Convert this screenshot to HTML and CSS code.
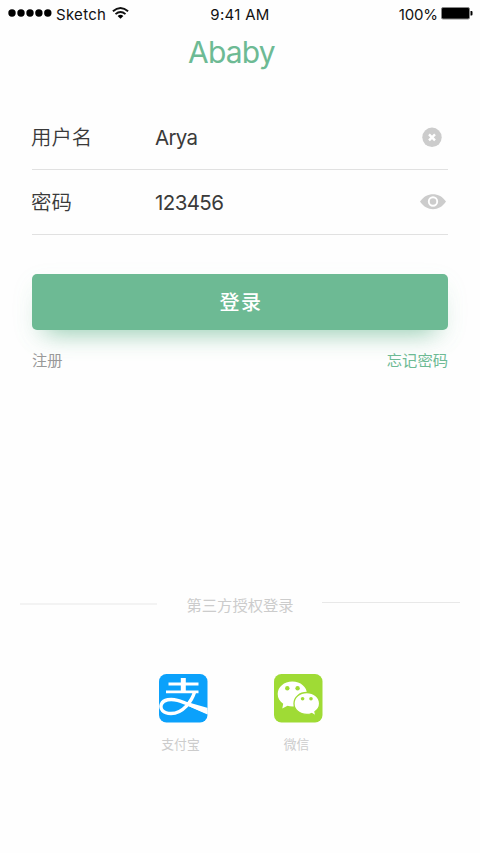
FILE: index.html
```html
<!DOCTYPE html>
<html lang="zh-CN">
<head>
<meta charset="utf-8">
<title>Ababy</title>
<link rel="stylesheet" href="styles.css">
</head>
<body>
<div class="status">
  <div class="status-left">
    <svg class="signal" width="44" height="8" viewBox="0 0 44 8"><circle cx="4" cy="4" r="3.7"/><circle cx="13" cy="4" r="3.7"/><circle cx="22" cy="4" r="3.7"/><circle cx="30.9" cy="4" r="3.7"/><circle cx="39.8" cy="4" r="3.7"/></svg>
    <span class="carrier">Sketch</span>
    <svg class="wifi" width="17" height="12" viewBox="0 0 17 12"><g fill="none" stroke="#111" stroke-width="1.9"><path d="M.9 4.3Q8.5-2.3 16.1 4.3"/><path d="M3.5 7.1Q8.5 2.7 13.5 7.1"/></g><path d="M5.6 9Q8.5 6.6 11.4 9L8.5 11.8z"/></svg>
  </div>
  <span class="time">9:41 AM</span>
  <div class="status-right">
    <span class="percent">100%</span>
    <svg class="battery" width="32" height="13" viewBox="0 0 32 13"><rect x=".5" y=".5" width="28" height="11.5" rx="1.5" fill="#000" stroke="#888"/><path d="M29.5 4h1q1 0 1 1v2.5q0 1-1 1h-1z"/></svg>
  </div>
</div>
<h1 class="title">Ababy</h1>
<form class="form">
  <div class="field">
    <span class="label">用户名</span>
    <span class="value">Arya</span>
    <svg class="clear" width="20" height="20" viewBox="0 0 20 20"><circle cx="10" cy="10.3" r="9.7" fill="#ccc"/><path d="M7 7.300l6 6M13 7.300l-6 6" stroke="#fff" stroke-width="2.400"/></svg>
  </div>
  <div class="field">
    <span class="label">密码</span>
    <span class="value digits">123456</span>
    <svg class="eye" width="26" height="16" viewBox="0 0 26 16"><path d="M0 7.500C6.500-2.300 19.500-2.300 26 7.500C19.500 17.700 6.500 17.700 0 7.500z" fill="#ccc"/><circle cx="13" cy="7.500" r="4.200" fill="#ccc" stroke="#fff" stroke-width="1.900"/></svg>
  </div>
  <button class="submit" type="button">登录</button>
  <div class="links"><a class="register">注册</a><a class="forgot">忘记密码</a></div>
</form>
<div class="divider"><i class="rule rule-left"></i><span class="divider-text">第三方授权登录</span><i class="rule rule-right"></i></div>
<div class="providers">
  <div class="provider">
    <svg width="49" height="49" viewBox="0 0 49 49"><defs><clipPath id="tile"><rect width="48.500" height="48.500" rx="7.500"/></clipPath></defs><g clip-path="url(#tile)"><rect width="49" height="49" fill="#0ba1fb"/><path d="M9.500 10H39.500M7 17.800H39.500" stroke="#fff" stroke-width="2.800"/><path d="M21.800 4h5v14h-5z" fill="#fff"/><path d="M35.700 17.500C33 27 24 39.500 12 39.500C4 39.500 .5 35 2.500 30C4.500 25.500 11.500 24.500 18.500 26.300C27 28.500 38 34.500 51 38.800" fill="none" stroke="#fff" stroke-width="3.400"/><path d="M28 28L50 34.200V41.300L27 31z" fill="#fff"/></g></svg>
    <span class="caption">支付宝</span>
  </div>
  <div class="provider">
    <svg width="49" height="49" viewBox="0 0 49 49"><rect width="48.500" height="48.500" rx="7.500" fill="#9fdb35"/><path d="M18.300 7.500C10 7.500 3.700 13 3.700 20C3.700 24 5.700 27.500 9.200 29.800L8.300 34.600L13.500 31.700C15 32.200 16.700 32.400 18.500 32.400C27 32.400 33 27 33 20C33 13 26.600 7.500 18.300 7.500z" fill="#fff"/><path d="M32.800 18.500C25.600 18.500 20 23.300 20 29.500C20 35.700 25.600 40.400 32.700 40.400C34.600 40.400 36.200 40.100 37.700 39.500L42 42L40.900 37.800C43.900 35.700 45.600 32.900 45.600 29.500C45.600 23.300 40 18.500 32.800 18.500z" fill="#fff" stroke="#9fdb35" stroke-width="1.300"/><g fill="#9fdb35"><circle cx="13.300" cy="14.200" r="2.200"/><circle cx="23.600" cy="14.200" r="2.200"/><circle cx="28.600" cy="24.700" r="1.800"/><circle cx="37" cy="24.700" r="1.800"/></g></svg>
    <span class="caption caption-wechat">微信</span>
  </div>
</div>
</body>
</html>
```
FILE: styles.css
```css
* { box-sizing: border-box; }
body {
  margin: 0;
  width: 480px;
  height: 853px;
  overflow: hidden;
  background: #fefefe;
  color: #3a3a3a;
  font-family: Inter, "Noto Sans CJK SC", sans-serif;
}
svg { display: block; flex: none; }
.status {
  display: grid;
  grid-template-columns: 1fr auto 1fr;
  height: 28px;
  padding: 0 7px 0 8px;
  align-items: center;
  color: #111;
  font-size: 15px;
  line-height: 28px;
}
.status-left, .status-right { display: flex; align-items: center; }
.status-right { justify-content: flex-end; }
.carrier, .time, .percent { padding-top: 2px; line-height: 26px; }
.carrier { margin-left: 4px; letter-spacing: .3px; }
.time { margin-left: -1px; letter-spacing: .3px; }
.percent { letter-spacing: -.1px; }
.signal { margin-top: -2px; }
.wifi { margin: -3px 0 0 6px; }
.battery { margin: -2px 0 0 3px; }
.title {
  margin: 4px 0 0;
  padding-right: 17px;
  height: 40px;
  line-height: 40px;
  text-align: center;
  font-size: 30px;
  font-weight: 400;
  letter-spacing: -.8px;
  color: #6dba94;
}
.form { margin: 33px 32px 0; }
.field {
  display: flex;
  align-items: center;
  height: 65px;
  border-bottom: 1px solid #e1e1e1;
}
.label { width: 124px; margin-left: -1px; padding-bottom: 2px; font-size: 20.4px; font-weight: 350; }
.value { flex: 1; font-size: 20.5px; font-weight: 400; letter-spacing: -.7px; }
.digits { letter-spacing: -.6px; }
.clear { margin-right: 6px; }
.eye { margin-right: 2px; }
.submit {
  display: block;
  width: 100%;
  height: 56px;
  margin-top: 39px;
  padding: 0 0 0 2px;
  border: 0;
  border-radius: 5px;
  background: #6dba94;
  box-shadow: 0 16px 24px -14px rgba(109, 186, 148, .75), 0 8px 24px rgba(109, 186, 148, .08);
  color: #fff;
  font: 500 20px/56px "Noto Sans CJK SC", sans-serif;
  letter-spacing: 1.5px;
}
.links {
  display: flex;
  justify-content: space-between;
  margin-top: 19px;
  font-size: 15.3px;
  line-height: 24px;
}
.register { color: #999; }
.forgot { color: #6dba94; }
.divider {
  display: flex;
  height: 24px;
  margin: 221px 20px 0;
}
.rule { height: 1px; background: #e8e8e8; }
.rule-left { width: 137px; height: 2px; margin-top: 9px; background: #f3f3f3; }
.rule-right { width: 139px; margin-top: 8px; }
.divider-text {
  width: 107px;
  margin: 0 28px 0 30px;
  font-size: 15.3px;
  line-height: 24px;
  color: #ccc;
  white-space: nowrap;
}
.providers {
  display: flex;
  justify-content: center;
  gap: 66px;
  margin-top: 56px;
  padding-left: 1px;
}
.provider { display: flex; flex-direction: column; align-items: center; width: 49px; }
.caption { margin: 12px 0 0 -5px; font-size: 12.8px; line-height: 20px; color: #ccc; white-space: nowrap; }
.caption-wechat { margin-left: -3px; }
```
